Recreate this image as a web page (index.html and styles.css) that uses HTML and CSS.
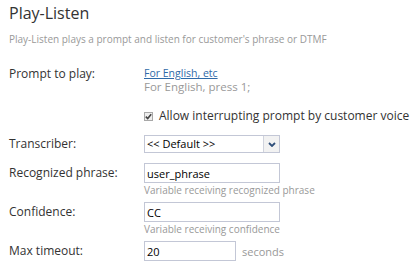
FILE: index.html
```html
<!DOCTYPE html>
<html lang="en">
<head>
  <meta charset="UTF-8" />
  <title>Play-Listen</title>
  <link rel="stylesheet" href="styles.css">
</head>
<body>
  <div class="panel">
    <h1>Play-Listen</h1>
    <p class="desc">Play-Listen plays a prompt and listen for customer's phrase or DTMF</p>

    <div class="form">
      <div class="row prompt-row">
        <label>Prompt to play:</label>
        <div class="field">
          <a href="#" class="prompt-link">For English, etc</a>
          <div class="prompt-text">For English, press 1;</div>
        </div>
      </div>

      <div class="row check-row">
        <span></span>
        <label class="check">
          <span class="box">
            <svg width="7" height="7" viewBox="0 0 7 7"><path d="M0.8 3.6 L2.7 5.5 L6.2 1.2" fill="none" stroke="#444" stroke-width="1.6"/></svg>
          </span>
          Allow interrupting prompt by customer voice
        </label>
      </div>

      <div class="row select-row">
        <label>Transcriber:</label>
        <div class="field">
          <div class="select">
            <span class="select-value">&lt;&lt; Default &gt;&gt;</span>
            <span class="select-btn">
              <svg width="8" height="5" viewBox="0 0 8 5"><path d="M1 1 L4 4 L7 1" fill="none" stroke="#2f4f7a" stroke-width="1.8"/></svg>
            </span>
          </div>
        </div>
      </div>

      <div class="row hint-row">
        <label>Recognized phrase:</label>
        <div class="field">
          <input class="text" type="text" value="user_phrase">
          <div class="hint">Variable receiving recognized phrase</div>
        </div>
      </div>

      <div class="row hint-row">
        <label>Confidence:</label>
        <div class="field">
          <input class="text" type="text" value="CC">
          <div class="hint">Variable receiving confidence</div>
        </div>
      </div>

      <div class="row">
        <label>Max timeout:</label>
        <div class="field inline">
          <input class="text short" type="text" value="20">
          <span class="unit">seconds</span>
        </div>
      </div>
    </div>
  </div>
</body>
</html>
```

FILE: styles.css
```css
body {
  margin: 0;
  background: #fff;
  font-family: "Open Sans", Arial, sans-serif;
  color: #333;
}
.panel {
  padding: 0 9px;
}
h1 {
  font-size: 16px;
  font-weight: normal;
  margin: 1px 0 0;
  line-height: 24px;
  color: #333;
}
.desc {
  font-size: 10px;
  color: #999;
  margin: 7px 0 0;
  line-height: 14px;
}
.form {
  margin-top: 20px;
}
.row {
  display: grid;
  grid-template-columns: 135px 1fr;
  align-items: start;
  margin-bottom: 10px;
}
.row > label {
  font-size: 12px;
  line-height: 20px;
}
.prompt-row {
  margin-bottom: 12px;
}
.prompt-row > label {
  line-height: 16px;
}
.prompt-link {
  display: block;
  font-size: 10.5px;
  line-height: 14px;
  color: #2f6aa8;
}
.prompt-text {
  font-size: 11.5px;
  color: #999;
  line-height: 14px;
}
.check-row {
  margin-bottom: 9px;
}
.check {
  display: flex;
  align-items: center;
  gap: 6px;
  font-size: 12px;
  line-height: 16px;
  white-space: nowrap;
}
.box {
  width: 7px;
  height: 7px;
  border: 1px solid #a8a8a8;
  background: #eee;
  display: flex;
  align-items: center;
  justify-content: center;
}
.select-row > label {
  line-height: 18px;
}
.select {
  box-sizing: border-box;
  width: 136px;
  height: 18px;
  border: 1px solid #c3c7d6;
  display: flex;
  font-size: 11px;
  color: #000;
}
.select-value {
  flex: 1;
  line-height: 16px;
  padding-left: 2px;
}
.select-btn {
  width: 15px;
  border-left: 1px solid #d0d3dd;
  background: #f2f2f2;
  display: flex;
  align-items: center;
  justify-content: center;
}
.text {
  box-sizing: border-box;
  display: block;
  width: 136px;
  height: 20px;
  border: 1px solid #c3c7d6;
  font-family: "Open Sans", Arial, sans-serif;
  font-size: 11px;
  color: #000;
  padding: 0 2px;
  margin: 0;
  outline: none;
}
.text.short {
  width: 92px;
}
.hint-row {
  margin-bottom: 5px;
}
.hint {
  font-size: 10px;
  color: #999;
  line-height: 13px;
  margin-top: 1px;
}
.inline {
  display: flex;
  align-items: center;
  gap: 6px;
}
.unit {
  font-size: 11px;
  color: #999;
}
```
